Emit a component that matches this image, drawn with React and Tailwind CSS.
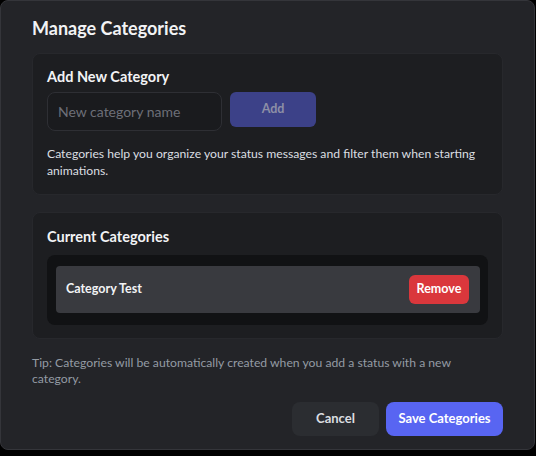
export default function App() {
  return (
    <div className="w-[536px] h-[456px] bg-black overflow-hidden" style={{ fontFamily: 'Lato, sans-serif' }}>
      <div className="w-[535px] h-[450px] bg-[#232428] border border-[#34353a] rounded-lg px-[31px] pt-[15px] flex flex-col">
        <h1 className="text-[18px] leading-[24px] font-bold text-[#f2f3f5]">Manage Categories</h1>
        <div className="mt-[13px] bg-[#1d1e21] border border-[#27282c] rounded-lg px-[14px] pt-[13px] pb-[15px]">
          <h2 className="text-[14.5px] leading-[20px] font-bold text-[#f2f3f5]">Add New Category</h2>
          <div className="mt-[5px] flex items-start gap-2">
            <input
              className="w-[175px] h-[39px] bg-[#1a1b1e] border border-[#2e2f34] rounded-lg px-[10px] text-[14px] text-[#dbdee1] placeholder:text-[#6d6f78] outline-none"
              placeholder="New category name"
              style={{ fontFamily: 'Lato, sans-serif' }}
            />
            <button className="w-[86px] h-[35px] bg-[#3c4188] rounded-md text-[12.5px] font-bold text-[#8d8fa6]">Add</button>
          </div>
          <p className="mt-[14px] text-[12.2px] leading-[17px] text-[#dbdee1]">
            Categories help you organize your status messages and filter them when starting animations.
          </p>
        </div>
        <div className="mt-[17px] bg-[#1d1e21] border border-[#27282c] rounded-lg px-[14px] pt-[14px] pb-[13px]">
          <h2 className="text-[14.5px] leading-[20px] font-bold text-[#f2f3f5]">Current Categories</h2>
          <div className="mt-[8px] bg-[#111214] rounded-lg pt-[11px] pb-[12px] pl-[9px] pr-2">
            <div className="h-[47px] bg-[#393a3f] rounded flex items-center justify-between pl-[10px] pr-[11px]">
              <span className="text-[12.5px] font-bold text-[#f2f3f5]">Category Test</span>
              <button className="w-[60px] h-[29px] bg-[#da373c] rounded-md text-[12.5px] font-bold text-white">Remove</button>
            </div>
          </div>
        </div>
        <p className="mt-[16px] max-w-[430px] text-[12.2px] leading-[16px] text-[#949ba4]">
          Tip: Categories will be automatically created when you add a status with a new category.
        </p>
        <div className="mt-[15px] flex justify-end gap-[7px]">
          <button className="w-[87px] h-[34px] bg-[#2b2d31] rounded-lg text-[13px] font-bold text-[#dbdee1]">Cancel</button>
          <button className="w-[117px] h-[34px] bg-[#5865f2] rounded-lg text-[13px] font-bold text-white">Save Categories</button>
        </div>
      </div>
    </div>
  );
}
